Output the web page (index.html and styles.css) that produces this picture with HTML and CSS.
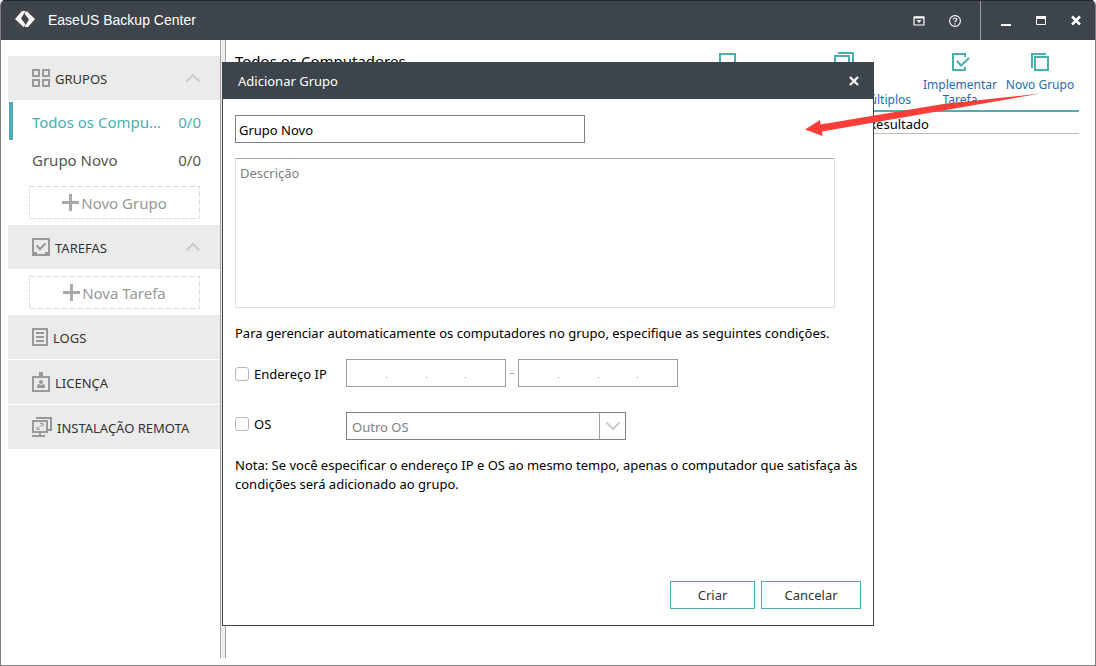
FILE: index.html
```html
<!DOCTYPE html>
<html lang="pt-BR">
<head>
<meta charset="utf-8">
<title>EaseUS Backup Center</title>
<link rel="stylesheet" href="styles.css">
</head>
<body>
<div class="window">
  <header class="titlebar">
    <svg class="logo" width="24" height="24" viewBox="0 0 24 24"><circle cx="12" cy="12" r="11.500" fill="#45454c"/><path d="M2 12L9 4h3.500L8 11.500l4.500 6L10.500 20z" fill="#fff"/><path d="M22 12l-7 8h-3.500L16 12.500l-4.500-6L13.500 4z" fill="#fff"/></svg>
    <h1 class="app-name">EaseUS Backup Center</h1>
    <div class="title-tools">
      <button class="tb-btn" aria-label="Menu"><svg width="12" height="12" viewBox="0 0 12 12"><path d="M1 2h10v8H1z" fill="none" stroke="#fff" stroke-width="1.200"/><path d="M1 1.500h10v2H1zM3.500 5h5L6 8z" fill="#fff"/></svg></button>
      <button class="tb-btn" aria-label="Ajuda"><svg width="12" height="12" viewBox="0 0 12 12"><circle cx="6" cy="6" r="5.400" fill="none" stroke="#fff" stroke-width="1.100"/><path d="M4.200 4.600C4.200 2.400 7.900 2.500 7.800 4.500 7.700 5.700 6 5.800 6 7.200M6 8.200v1.200" fill="none" stroke="#fff" stroke-width="1.200"/></svg></button>
    </div>
    <div class="title-window">
      <button class="tb-btn" aria-label="Minimizar"><svg width="12" height="12" viewBox="0 0 12 12"><path d="M1 9h10v2H1z" fill="#fff"/></svg></button>
      <button class="tb-btn" aria-label="Maximizar"><svg width="12" height="12" viewBox="0 0 12 12"><path d="M1.500 1.500h9v8h-9z" fill="none" stroke="#fff"/><path d="M1 1h10v3H1z" fill="#fff"/></svg></button>
      <button class="tb-btn" aria-label="Fechar"><svg width="12" height="12" viewBox="0 0 12 12"><path d="M2 1.500l8 8M10 1.500l-8 8" stroke="#fff" stroke-width="2.500"/></svg></button>
    </div>
  </header>

  <div class="body">
    <nav class="sidebar">
      <button class="section">
        <svg width="18" height="18" viewBox="0 0 18 18" fill="none" stroke="#999" stroke-width="2"><path d="M1 1h6v6H1zM11 1h6v6h-6zM1 11h6v6H1zM11 11h6v6h-6z"/></svg>
        <span class="section-name">GRUPOS</span>
        <svg class="chevron" width="16" height="10" viewBox="0 0 16 10"><path d="M1.500 8.500L8 2l6.500 6.500"/></svg>
      </button>
      <ul class="groups">
        <li><a class="group active" href="#todos"><span>Todos os Compu...</span><span>0/0</span></a></li>
        <li><a class="group" href="#novo"><span>Grupo Novo</span><span>0/0</span></a></li>
      </ul>
      <button class="add"><svg class="dash" width="100%" height="100%"><rect x="0" y="0" width="100%" height="100%"/></svg><svg width="17" height="17" viewBox="0 0 17 17"><path d="M7 0h3v7h7v3h-7v7H7v-7H0V7h7z" fill="#aaa"/></svg><span>Novo Grupo</span></button>
      <button class="section">
        <svg width="18" height="18" viewBox="0 0 18 18" fill="none" stroke="#999" stroke-width="2"><path d="M1 1h16v16H1z"/><path d="M1 14h4v2h8v-2h4v3H1z" fill="#999" stroke="none"/><path d="M4.500 7.500l3.500 3.500L13.500 5.500"/></svg>
        <span class="section-name">TAREFAS</span>
        <svg class="chevron" width="16" height="10" viewBox="0 0 16 10"><path d="M1.500 8.500L8 2l6.500 6.500"/></svg>
      </button>
      <button class="add"><svg class="dash" width="100%" height="100%"><rect x="0" y="0" width="100%" height="100%"/></svg><svg width="17" height="17" viewBox="0 0 17 17"><path d="M7 0h3v7h7v3h-7v7H7v-7H0V7h7z" fill="#aaa"/></svg><span>Nova Tarefa</span></button>
      <button class="section">
        <svg width="16" height="18" viewBox="0 0 16 18" fill="none" stroke="#999" stroke-width="2"><path d="M1 1h14v16H1zM4 5h8M4 9h8M4 13h8"/></svg>
        <span class="section-name">LOGS</span>
      </button>
      <button class="section">
        <svg width="18" height="20" viewBox="0 0 18 20" fill="none" stroke="#999" stroke-width="2"><path d="M1 5h16v14H1z"/><path d="M7 0h4v5H7z" fill="#999" stroke="none"/><circle cx="9" cy="10" r="2" fill="#999" stroke="none"/><path d="M5 16v-2q0-2 2-2l2 1 2-1q2 0 2 2v2z" fill="#999" stroke="none"/></svg>
        <span class="section-name">LICENÇA</span>
      </button>
      <button class="section">
        <svg width="20" height="20" viewBox="0 0 20 20" fill="none" stroke="#999" stroke-width="2"><path d="M1 4h14v11H1zM4 1h15v12h-3M0 19h13"/><path d="M7 16h2v2H7z" fill="#999" stroke="none"/><path d="M5.500 12l5-5M8 6.500h3v3M5 9.500v3h3" stroke-width="1"/></svg>
        <span class="section-name">INSTALAÇÃO REMOTA</span>
      </button>
    </nav>
    <div class="splitter"></div>

    <main class="content">
      <div class="toolbar">
        <h2 class="page-title">Todos os Computadores</h2>
        <button class="tool" aria-label="Adicionar"><svg width="20" height="20" viewBox="0 0 20 20"><path d="M2 2h15v15H2z"/></svg></button>
        <button class="tool tool-multi"><svg width="20" height="20" viewBox="0 0 20 20"><path d="M1 4h14v15H1zM4 1h15v15"/></svg><span><br>Múltiplos</span></button>
        <button class="tool"><svg width="20" height="20" viewBox="0 0 20 20"><path d="M15 5V2H3v16h12v-3"/><path d="M7 9l4 4.500L19 6"/></svg><span>Implementar<br>Tarefa</span></button>
        <button class="tool"><svg width="20" height="20" viewBox="0 0 20 20"><path d="M5 5h13v13H5zM2 16V2h14"/></svg><span>Novo Grupo</span></button>
      </div>
      <table class="list"><thead><tr><td></td><th scope="col">Resultado</th></tr></thead></table>
    </main>
  </div>

  <form class="dialog" role="dialog" aria-labelledby="dlg-title">
    <div class="dialog-head">
      <h2 id="dlg-title">Adicionar Grupo</h2>
      <button class="tb-btn" type="button" aria-label="Fechar"><svg width="12" height="12" viewBox="0 0 12 12"><path d="M2 2l8 8M10 2l-8 8" stroke="#fff" stroke-width="2.300"/></svg></button>
    </div>
    <div class="dialog-body">
      <input class="name" type="text" value="Grupo Novo" aria-label="Nome">
      <textarea class="desc" placeholder="Descrição" aria-label="Descrição"></textarea>
      <p class="lead">Para gerenciar automaticamente os computadores no grupo, especifique as seguintes condições.</p>
      <div class="row">
        <label class="check"><input type="checkbox">Endereço IP</label>
        <div class="ip" role="group" aria-label="IP inicial"><input aria-label="1"><i></i><input aria-label="2"><i></i><input aria-label="3"><i></i><input aria-label="4"></div>
        <span class="to"></span>
        <div class="ip" role="group" aria-label="IP final"><input aria-label="1"><i></i><input aria-label="2"><i></i><input aria-label="3"><i></i><input aria-label="4"></div>
      </div>
      <div class="row row-os">
        <label class="check"><input type="checkbox">OS</label>
        <div class="combo">
          <select aria-label="OS"><option>Outro OS</option></select>
          <span class="arrow-box"><svg class="chevron" width="16" height="10" viewBox="0 0 16 10"><path d="M1.500 1.500L8 8l6.500-6.500"/></svg></span>
        </div>
      </div>
      <p class="note">Nota: Se você especificar o endereço IP e OS ao mesmo tempo, apenas o computador que satisfaça às condições será adicionado ao grupo.</p>
    </div>
    <div class="dialog-foot">
      <button class="btn" type="button">Criar</button>
      <button class="btn btn-wide" type="button">Cancelar</button>
    </div>
  </form>

  <svg class="pointer" width="240" height="46" viewBox="0 0 240 46"><path d="M0 38.500L15 29l.5 4.500L138 13 236 2.500 138 19.500 17 40.500 17.500 45z" fill="#fe3c38"/></svg>
</div>
</body>
</html>
```

FILE: styles.css
```css
* { box-sizing: border-box; }
body {
  margin: 0;
  background: #fff;
  font-family: "Noto Sans", "Open Sans", sans-serif;
  font-size: 13px;
  color: #000;
}
h1, h2, p, ul { margin: 0; padding: 0; font-weight: 400; }
button, input, select, textarea { font: inherit; color: inherit; margin: 0; }
button { border: 0; padding: 0; background: none; }
svg { display: block; flex: none; }

.window {
  position: relative;
  display: flex;
  flex-direction: column;
  min-height: 100vh;
  border: 1px solid #808080;
  border-top: 0;
  border-radius: 5px 5px 0 0;
  overflow: hidden;
}
.titlebar {
  display: flex;
  align-items: stretch;
  height: 40px;
  background: #3e444c;
  border-top: 1px solid #22262b;
  color: #fff;
}
.logo { margin: 6px 11px 0 12px; }
.app-name {
  flex: 1;
  font-family: "Liberation Sans", Arial, sans-serif;
  font-size: 14px;
  line-height: 38px;
}
.title-tools, .title-window { display: flex; align-items: center; }
.title-tools { gap: 24px; padding-right: 19px; }
.title-window { gap: 23px; padding: 0 13px 0 19px; border-left: 1px solid #9a9da1; }

.body { flex: 1; display: flex; padding: 0 16px 7px 7px; }
.sidebar { width: 212px; padding-top: 16px; flex: none; }
.section {
  display: flex;
  align-items: center;
  gap: 5px;
  width: 100%;
  height: 44px;
  margin-bottom: 1px;
  padding: 0 19px 0 24px;
  background: #ebebeb;
  color: #333;
  text-align: left;
}
.section-name { flex: 1; padding-top: 2px; white-space: nowrap; }
.chevron { fill: none; stroke: #ccc; stroke-width: 2; }
.groups { list-style: none; padding-top: 1px; }
.group {
  display: flex;
  justify-content: space-between;
  height: 38px;
  padding: 0 19px;
  border-left: 4px solid transparent;
  margin-left: 1px;
  font-size: 15px;
  line-height: 40px;
  color: #555;
  text-decoration: none;
}
.group.active { color: #4cadb2; border-color: #4cadb2; }
.add {
  position: relative;
  display: flex;
  align-items: center;
  justify-content: center;
  gap: 2px;
  width: 171px;
  height: 33px;
  margin: 7px 0 6px 21px;
  font-size: 15px;
  color: #999;
}
.groups + .add { margin-top: 8px; }
.dash { position: absolute; inset: 0; fill: none; stroke: #ddd; stroke-width: 2; stroke-dasharray: 6 2; }
.splitter {
  width: 6px;
  flex: none;
  background: #ededed;
  border: solid #a5a5a5;
  border-width: 0 1px;
}

.content { flex: 1; min-width: 0; padding: 11px 0 0 9px; }
.toolbar {
  display: flex;
  align-items: flex-start;
  height: 61px;
  border-bottom: 2px solid #4cadb2;
}
.page-title { flex: 1; font-size: 15px; line-height: 20px; white-space: nowrap; }
.tool {
  display: flex;
  flex-direction: column;
  align-items: center;
  gap: 5px;
  width: 82px;
  padding-top: 1px;
  font-size: 12px;
  line-height: 15px;
  color: #1f6cb0;
  white-space: nowrap;
}
.tool svg { fill: none; stroke: #4cadb2; stroke-width: 2; }
.tool:last-child { width: 78px; }
.tool-multi { width: 150px; }
.tool-multi span { align-self: flex-end; padding-right: 8px; }
.list { width: 100%; border-collapse: collapse; border-bottom: 1px solid #bbb; }
.list td, .list th { padding: 3px 0 0; line-height: 18px; font-weight: 400; text-align: left; }
.list th { width: 211px; }

.dialog {
  position: absolute;
  left: 221px;
  top: 62px;
  width: 652px;
  min-height: 564px;
  display: flex;
  flex-direction: column;
  border: 1px solid #3e444c;
  background: #fff;
}
.dialog-head {
  display: flex;
  align-items: center;
  justify-content: space-between;
  height: 36px;
  padding: 0 13px 0 15px;
  background: #3e444c;
  color: #fff;
}
.dialog-head h2 { font-size: 13px; }
.dialog-body { flex: 1; padding: 16px 12px 0; }
.name {
  display: block;
  width: 350px;
  height: 28px;
  padding: 2px 3px 0;
  border: 1px solid #808080;
}
.desc {
  display: block;
  width: 600px;
  height: 150px;
  margin-top: 15px;
  padding: 5px 4px;
  border: 1px solid #e0e0e0;
  border-top-color: #a5a5a5;
  resize: none;
}
.desc::placeholder { color: #808080; opacity: 1; }
.lead { margin-top: 16px; line-height: 19px; }
.row { display: flex; align-items: center; height: 28px; margin-top: 16px; }
.row-os { margin-top: 25px; }
.check { display: flex; align-items: center; gap: 5px; width: 111px; padding-top: 1px; }
.check input {
  appearance: none;
  width: 14px;
  height: 14px;
  border: 1px solid #b8b8b8;
  border-radius: 3px;
}
.row-os .check { margin-bottom: 6px; }
.ip {
  display: flex;
  width: 160px;
  height: 28px;
  border: 1px solid #a0a0a4;
}
.ip input { flex: 1; min-width: 0; border: 0; padding: 0; text-align: center; background: none; }
.ip i { width: 1px; height: 1px; margin-top: 17px; background: #999; }
.to { width: 4px; height: 1px; margin: 0 4px; background: #999; }
.combo { display: flex; width: 280px; height: 28px; border: 1px solid #808080; }
.combo select {
  appearance: none;
  flex: 1;
  border: 0;
  padding: 2px 5px 0;
  background: none;
  color: #808080;
}
.arrow-box { display: grid; place-items: center; width: 26px; border-left: 1px solid #a0a0a0; }
.note { margin-top: 16px; line-height: 19px; }
.dialog-foot { display: flex; justify-content: flex-end; gap: 6px; padding: 0 12px 16px; }
.btn { width: 85px; height: 28px; border: 1px solid #4cadb2; color: #333; }
.btn-wide { width: 100px; }

.pointer { position: absolute; right: 50px; top: 91px; }
```
